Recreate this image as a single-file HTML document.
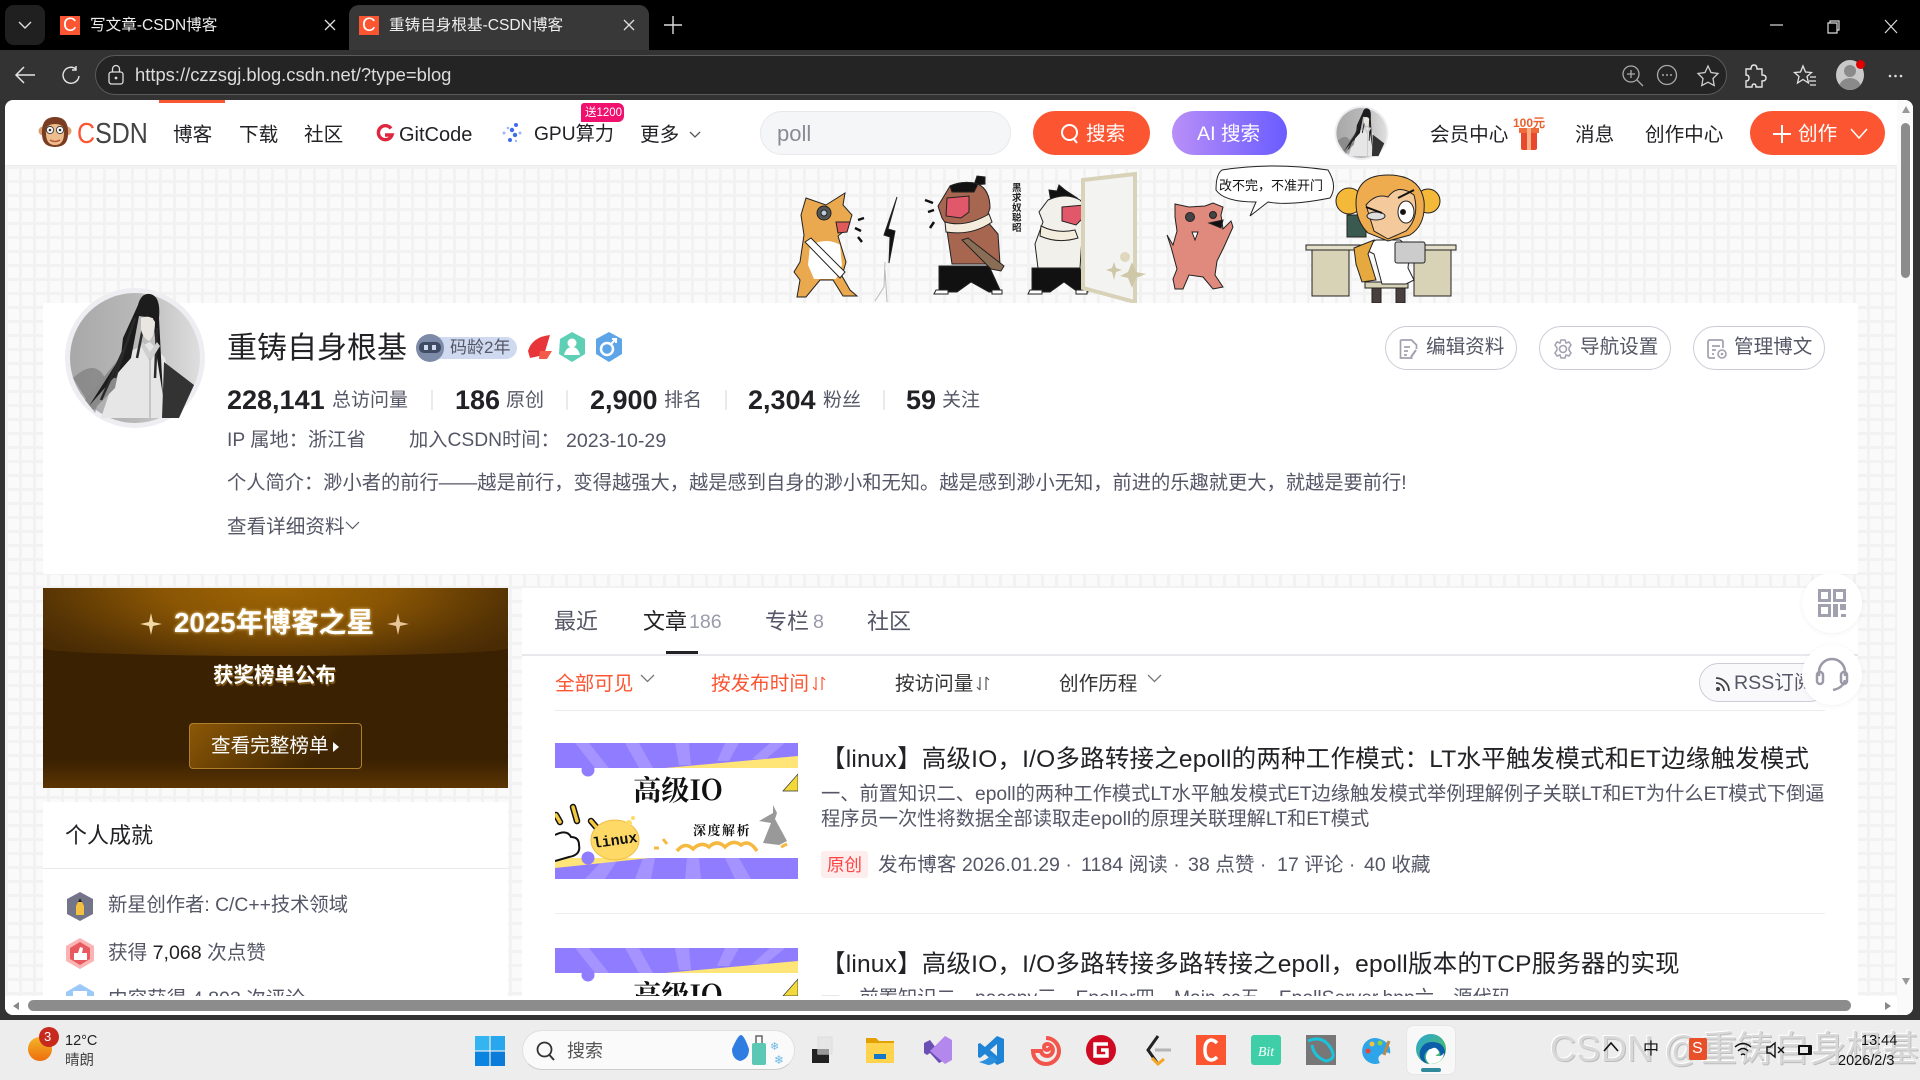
<!DOCTYPE html>
<html lang="zh"><head><meta charset="utf-8"><title>重铸自身根基-CSDN博客</title>
<style>
*{box-sizing:border-box}
html,body{margin:0;padding:0;width:1920px;height:1080px;overflow:hidden;background:#333;font-family:"Liberation Sans","Noto Sans CJK SC",sans-serif}
.a{position:absolute}
.t{position:absolute;white-space:nowrap;line-height:30px;height:30px;font-size:19.6px;color:#555666;margin-top:1px}
.d{color:#222226}
.nav{color:#222226;margin-top:2px}
svg{position:absolute;overflow:visible}
.btn{position:absolute;top:326px;width:132px;height:44px;border:1px solid #ccccd8;border-radius:22px;background:#fff}
.sep{position:absolute;top:390px;width:2px;height:20px;background:#eaeaee}
.num{font-weight:700;font-size:27px;color:#222226}
.ti{position:absolute;top:1035px;width:30px;height:30px}
</style></head><body>
<svg width="0" height="0" style="position:absolute">
<defs>
<symbol id="av" viewBox="0 0 140 140">
<defs><linearGradient id="ag" x1="0" y1="0" x2="1" y2="0"><stop offset="0" stop-color="#a8a8a8"/><stop offset=".5" stop-color="#b8b8b8"/><stop offset="1" stop-color="#dedede"/></linearGradient></defs>
<circle cx="70" cy="70" r="70" fill="#eeeef2"/>
<circle cx="70" cy="70" r="65" fill="url(#ag)"/>
<path d="M8 90Q30 70 40 90L30 125z" fill="#777" opacity=".6"/>
<path d="M85 54L57 67 36 130H112L100 70z" fill="#e6e6e6"/>
<path d="M99 74L129 97 114 130H97z" fill="#333"/>
<path d="M57 67L20 112 28 122 50 100z" fill="#8a8a8a"/>
<path d="M73 17Q76 5 85 6 96 8 94 30L98 108 92 70 88 30 74 28 66 70 24 118 56 68 58 50z" fill="#1c1c1c"/>
<path d="M80 30L72 70M70 30L50 90M92 40L90 90M64 50L36 112" stroke="#2a2a2a" stroke-width="2.500" fill="none"/>
<path d="M76 30Q86 26 90 34 90 48 84 53 78 50 76 42z" fill="#e9e5e0"/>
<path d="M78 54l7 10 7-10 3 4-10 16-9-16z" fill="#cfcfcf"/>
<path d="M85 70v60" stroke="#bbb" stroke-width="1.500"/>
</symbol>
<symbol id="th" viewBox="0 0 243 136">
<rect width="243" height="136" fill="#fff"/>
<rect width="243" height="25" fill="#8f7cff"/>
<path d="M20 0l20 25h14L34 0zM70 0l14 25h14L84 0zM120 0l4 22h12L134 0zM170 0l-8 18h12L184 0zM215 0l-18 16h14L230 0z" fill="#a593ff"/>
<path d="M110 25L243 13V25z" fill="#ffe477"/>
<rect y="115" width="243" height="21" fill="#8f7cff"/>
<path d="M30 136l20-21h14L50 136zM80 136l8-21h12L96 136zM130 136l2-21h12L146 136zM180 136l-10-21h14L196 136z" fill="#a593ff"/>
<path d="M0 115H95L0 125z" fill="#ffe477"/>
<circle cx="33" cy="27" r="6.500" fill="#8f7cff"/><circle cx="33" cy="115" r="6.500" fill="#8f7cff"/>
<path d="M228 48L243 31V48z" fill="#f2d83a" stroke="#333" stroke-width=".7"/>
<text x="123" y="57" font-size="28" font-weight="700" text-anchor="middle" font-family="'Noto Serif CJK SC','Liberation Serif',serif" fill="#111">高级IO</text>
<path d="M1 72l4 7M18 64l4 14M36 78l6 7" stroke="#111" stroke-width="6.500" stroke-linecap="round"/>
<path d="M1 72l4 7M18 64l4 14M36 78l6 7" stroke="#f5c93d" stroke-width="3.500" stroke-linecap="round"/>
<path d="M0 92q12-6 16 2 8 0 8 8 2 10-10 12L0 118" fill="#fff" stroke="#111" stroke-width="2"/>
<ellipse cx="60" cy="97" rx="24" ry="20" fill="#ffd966" stroke="#f0bd45"/>
<circle cx="74" cy="80" r="3" fill="#ffd966"/><circle cx="78" cy="75" r="2" fill="#ffd966"/>
<text x="60" y="102" font-size="15" font-weight="700" text-anchor="middle" transform="rotate(-8 60 97)" fill="#111" font-family="'Liberation Mono',monospace">linux</text>
<text x="138" y="92" font-size="13" font-weight="700" letter-spacing="1.500" fill="#111" font-family="'Noto Serif CJK SC',serif">深度解析</text>
<path d="M218 62l4 8-2 6 12 22-8 4-16-2 8-20-12-2 14-8z" fill="#999"/>
<path d="M122 108q8-10 16-2 8-8 16-2 8-8 16 0 8-8 16-2 8-6 16 6" fill="none" stroke="#f5b93f" stroke-width="3.500"/>
<path d="M108 96l4 5M104 105h-5M232 101l-6 3" stroke="#f5b93f" stroke-width="3"/>
</symbol>
</defs></svg>

<!-- Tab strip -->
<div class="a" style="left:0;top:0;width:1920px;height:50px;background:#000"></div>
<div class="a" style="left:5px;top:5px;width:40px;height:40px;background:#202020;border-radius:9px"></div>
<svg style="left:18px;top:20px" width="14" height="10"><path d="M1 2l6 6 6-6" fill="none" stroke="#ddd" stroke-width="1.400"/></svg>
<div class="a" style="left:60px;top:16px;width:20px;height:19px;background:#fc5531"></div>
<div class="t" style="left:63px;top:10px;color:#fff;font-size:19px">C</div>
<div class="t" style="left:90px;top:10px;color:#eee;font-size:15.600px">写文章-CSDN博客</div>
<svg style="left:324px;top:19px" width="12" height="12"><path d="M1 1l10 10M11 1L1 11" stroke="#ddd" stroke-width="1.300"/></svg>
<div class="a" style="left:349px;top:5px;width:300px;height:45px;background:#383838;border-radius:10px 10px 0 0"></div>
<div class="a" style="left:359px;top:16px;width:20px;height:19px;background:#fc5531"></div>
<div class="t" style="left:362px;top:10px;color:#fff;font-size:19px">C</div>
<div class="t" style="left:389px;top:10px;color:#eee;font-size:15.600px">重铸自身根基-CSDN博客</div>
<svg style="left:623px;top:19px" width="12" height="12"><path d="M1 1l10 10M11 1L1 11" stroke="#ddd" stroke-width="1.300"/></svg>
<svg style="left:664px;top:16px" width="18" height="18"><path d="M9 0v18M0 9h18" stroke="#ddd" stroke-width="1.400"/></svg>
<svg style="left:1770px;top:20px" width="140" height="14"><path d="M0 5h13" stroke="#ddd" stroke-width="1.200"/><path d="M58 3h9v10h-9zM60 3V1h9v9h-2" fill="none" stroke="#ddd" stroke-width="1.200"/><path d="M115 0l12 13M127 0l-12 13" stroke="#ddd" stroke-width="1.200"/></svg>

<!-- Toolbar -->
<div class="a" style="left:0;top:50px;width:1920px;height:50px;background:#333"></div>
<svg style="left:14px;top:65px" width="22" height="20"><path d="M10 2L2 10l8 8M2 10h19" fill="none" stroke="#e5e5e5" stroke-width="1.500"/></svg>
<svg style="left:61px;top:65px" width="20" height="20"><path d="M15 4A8 8 0 1 0 18 11M15 1v4h-4" fill="none" stroke="#e5e5e5" stroke-width="1.400"/></svg>
<div class="a" style="left:95px;top:55px;width:1632px;height:40px;background:#242424;border:1px solid #5a5a5a;border-radius:20px"></div>
<svg style="left:108px;top:65px" width="16" height="20"><rect x="1" y="7" width="14" height="12" rx="2.500" fill="none" stroke="#ddd" stroke-width="1.300"/><path d="M4.500 7V4a3.500 3.500 0 0 1 7 0v3" fill="none" stroke="#ddd" stroke-width="1.300"/><circle cx="8" cy="13" r="1.400" fill="#ddd"/></svg>
<div class="t" style="left:135px;top:59px;color:#dcdcdc;font-size:18.400px">https://czzsgj.blog.csdn.net/?type=blog</div>
<svg style="left:1620px;top:64px" width="290" height="24">
<circle cx="11" cy="10" r="8" fill="none" stroke="#aaa" stroke-width="1.300"/><path d="M17 16l6 6M7 10h8M11 6v8" stroke="#aaa" stroke-width="1.300"/>
<circle cx="47" cy="11" r="9.500" fill="none" stroke="#aaa" stroke-width="1.300"/><path d="M42 11h2M46 11h2M50 11h2" stroke="#aaa" stroke-width="1.600"/>
<path d="M88 2l3 6.500 7 1-5 5 1.200 7-6.200-3.300-6.200 3.300 1.200-7-5-5 7-1z" fill="none" stroke="#ccc" stroke-width="1.300"/>
<path d="M127 4h5q0-4 3-4t3 4h5v6q4 0 4 3t-4 3v6h-6q0-3-2-3t-2 3h-6v-6q3 0 3-3t-3-3z" fill="none" stroke="#e5e5e5" stroke-width="1.400" transform="translate(-1,1)"/>
<path d="M183 2l2.500 6 6 .5-4.500 4 1.500 6.500-5.500-3.500-5.500 3.500 1.500-6.500-4.500-4 6-.5zM190 13h6M189 17h7M190 21h6" fill="none" stroke="#e5e5e5" stroke-width="1.300"/>
<circle cx="270" cy="12" r="1.300" fill="#ddd"/><circle cx="275.500" cy="12" r="1.300" fill="#ddd"/><circle cx="281" cy="12" r="1.300" fill="#ddd"/>
</svg>
<div class="a" style="left:1836px;top:60px;width:28px;height:30px;border-radius:50%;background:#c9c9c9;overflow:hidden"><div class="a" style="left:8px;top:5px;width:12px;height:12px;border-radius:50%;background:#8a8a8a"></div><div class="a" style="left:3px;top:18px;width:22px;height:20px;border-radius:50%;background:#8a8a8a"></div></div>
<div class="a" style="left:1856px;top:60px;width:9px;height:9px;border-radius:50%;background:#e00000"></div>

<!-- Page -->
<div class="a" style="left:5px;top:100px;width:1908px;height:915px;background:#fff;border-radius:8px 8px 8px 8px;overflow:hidden">
<div class="a" style="left:0;top:66px;width:1908px;height:830px;background-color:#fafafa;background-image:linear-gradient(#f2f2f2 3px,transparent 3px),linear-gradient(90deg,#f2f2f2 3px,transparent 3px);background-size:14px 14px"></div>
</div>
<div class="a" style="left:159px;top:100px;width:66px;height:3px;background:#fc5531"></div>
<div class="a" style="left:5px;top:165px;width:1892px;height:1px;background:#ececec"></div>

<!-- Nav -->
<svg style="left:38px;top:116px" width="34" height="32" viewBox="0 0 34 32">
<circle cx="5" cy="15" r="4.500" fill="#d9a06f"/><circle cx="29" cy="15" r="4.500" fill="#d9a06f"/>
<path d="M17 1q14 0 13 17 0 13-13 13T4 18Q3 1 17 1z" fill="#7a3d22"/>
<path d="M17 8q10 0 9 9 0 12-9 12T8 17q-1-9 9-9z" fill="#eebd8e"/>
<circle cx="12" cy="14" r="3.600" fill="#fff" stroke="#444"/><circle cx="22" cy="14" r="3.600" fill="#fff" stroke="#444"/>
<circle cx="12" cy="14" r="1.300" fill="#333"/><circle cx="22" cy="14" r="1.300" fill="#333"/>
<path d="M12 24q5 3 10 0" fill="none" stroke="#b8553a" stroke-width="1.500"/></svg>
<div class="t" style="left:77px;top:118px;font-size:25px;color:#444;transform:scaleY(1.15)"><span style="color:#fc5531">C</span>SDN</div>
<div class="t nav" style="left:173px;top:118px">博客</div>
<div class="t nav" style="left:239px;top:118px">下载</div>
<div class="t nav" style="left:304px;top:118px">社区</div>
<svg style="left:376px;top:124px" width="17" height="18"><path d="M15 4.500A7 7 0 1 0 16 11H9" fill="none" stroke="#e0263f" stroke-width="3.400"/></svg>
<div class="t nav" style="left:399px;top:118px;font-size:20px">GitCode</div>
<svg style="left:501px;top:122px" width="22" height="22"><g fill="#3f6bea"><circle cx="15" cy="3" r="2"/><circle cx="11" cy="8" r="2.200"/><circle cx="14" cy="13" r="2.200"/><circle cx="9" cy="18" r="2"/></g><g fill="#9db6f7"><circle cx="3" cy="11" r="1.500"/><circle cx="7" cy="6" r="1.300"/><circle cx="19" cy="11" r="1.500"/><circle cx="15" cy="19" r="1.200"/></g></svg>
<div class="t nav" style="left:534px;top:118px;font-size:19.200px">GPU算力</div>
<div class="a" style="left:581px;top:103px;width:43px;height:19px;background:#f0106e;border-radius:3px 6px 6px 0"></div>
<div class="t" style="left:585px;top:97px;color:#fff;font-size:11.500px">送1200</div>
<div class="t nav" style="left:640px;top:118px">更多</div>
<svg style="left:689px;top:131px" width="12" height="8"><path d="M1 1l5 5 5-5" fill="none" stroke="#555" stroke-width="1.300"/></svg>
<div class="a" style="left:760px;top:111px;width:251px;height:44px;background:#f5f6f7;border:1px solid #e8e8ed;border-radius:22px"></div>
<div class="t" style="left:777px;top:118px;font-size:22px;color:#8a8a96">poll</div>
<div class="a" style="left:1033px;top:111px;width:117px;height:44px;background:#fc5531;border-radius:22px"></div>
<svg style="left:1060px;top:123px" width="20" height="22"><circle cx="9.500" cy="9.500" r="7.500" fill="none" stroke="#fff" stroke-width="2"/><path d="M13 15l4 5" stroke="#fff" stroke-width="2"/></svg>
<div class="t" style="left:1086px;top:118px;color:#fff">搜索</div>
<div class="a" style="left:1172px;top:111px;width:115px;height:44px;background:linear-gradient(90deg,#b98ff8,#6a5cff);border-radius:22px"></div>
<div class="t" style="left:1197px;top:118px;color:#fff">AI 搜索</div>
<svg style="left:1334px;top:106px" width="55" height="54"><use href="#av" width="55" height="54"/></svg>
<div class="t nav" style="left:1430px;top:118px">会员中心</div>
<svg style="left:1514px;top:116px" width="31" height="35"><rect x="7" y="14" width="16" height="20" rx="2" fill="#e8482e"/><rect x="5" y="12" width="20" height="5" fill="#f06a3a"/><rect x="13" y="12" width="4" height="22" fill="#f4b183"/><text x="15" y="11" font-size="12" font-weight="700" text-anchor="middle" fill="#e8602e" font-family="'Liberation Sans',sans-serif">100元</text></svg>
<div class="t nav" style="left:1575px;top:118px">消息</div>
<div class="t nav" style="left:1645px;top:118px">创作中心</div>
<div class="a" style="left:1750px;top:111px;width:135px;height:44px;background:#fc5531;border-radius:22px"></div>
<svg style="left:1772px;top:124px" width="20" height="20"><path d="M10 1v18M1 10h18" stroke="#fff" stroke-width="2"/></svg>
<div class="t" style="left:1798px;top:118px;color:#fff">创作</div>
<svg style="left:1850px;top:128px" width="18" height="12"><path d="M1 1l8 9 8-9" fill="none" stroke="#fff" stroke-width="1.500"/></svg>

<!-- Banner -->
<svg style="left:0;top:0" width="1920" height="1080">
<g stroke="#222" stroke-width="1">
<!-- dog -->
<path d="M806 198L826 205 845 193 843 205 852 215 848 228 838 236 846 262 842 276 850 290 857 296H843L833 280H820L806 297H797L800 280 794 272 800 262 804 235 801 215z" fill="#eaa94f"/>
<path d="M810 245q18-8 30 0l2 20-6 14-22 0-6-14z" fill="#fff" stroke="none"/>
<path d="M805 242l6-4 34 34-5 6z" fill="#fff"/>
<circle cx="824" cy="213" r="7" fill="#555"/><circle cx="824" cy="213" r="3" fill="#bcd"/>
<path d="M836 222l14 0-3 10-9 1z" fill="#e05a5a"/>
<path d="M858 220l6-2M855 228l6 3M858 237l4 5" stroke="#111" stroke-width="2.500"/>
<!-- lightning -->
<path d="M897 197l-9 32 7 2-6 32 1-26-6-2z" fill="#111"/>
<path d="M885 262l-1 25-9 14M885 270l2 32" fill="none" stroke="#bbb"/>
<!-- brown man -->
<path d="M974 185l3-9 8 1 0 7z" fill="#111"/>
<path d="M950 186q14-6 28-2 12 6 12 24l-4 12 12 14 2 30-48 0 -6-40 -4-6-4-12z" fill="#a66650"/>
<path d="M950 186q14-6 28-2l-4 8-22 0z" fill="#111"/>
<path d="M947 198l22-2 0 16-8 6-15-2z" fill="#e0586a"/>
<path d="M945 222q20 6 44-8l3 8q-20 14-46 10z" fill="#f4ecdc"/>
<path d="M939 266h50l12 26h-12l-18-10-14 10h-18z" fill="#111"/>
<path d="M936 290h12v4h-14zM992 290h10v4h-10z" fill="#fff"/>
<path d="M962 240l6-2 36 28-3 5-10-2z" fill="#8a6d55"/>
<path d="M925 200l8 3M928 212l6-2M934 222l-4 6" stroke="#111" stroke-width="2.500"/>
<!-- white man -->
<path d="M1049 190l8 1 2-6 6 5 12 8-26 4z" fill="#111"/>
<path d="M1048 200q18-8 32 0l8 10-6 16 0 12-2 30h-42l-3-24 8-22-4-10z" fill="#f2f0ea"/>
<path d="M1062 207l22-2 0 12-8 8-14-4z" fill="#e0586a"/>
<path d="M1041 226q16 8 34 4l3 8q-20 6-38-2z" fill="#f4ecdc"/>
<path d="M1032 268h48l8 24h-10l-14-10-14 10h-18z" fill="#111"/>
<path d="M1030 290h12v4h-14zM1076 290h11v4h-11z" fill="#fff"/>
<path d="M1100 210l8-3M1098 221l8 1M1100 232l5 5" stroke="#111" stroke-width="2.500"/>
<!-- door -->
<path d="M1083 180l52-6v128l-52-14z" fill="#f3f3f2" stroke="#d8d2b8" stroke-width="4"/>
<circle cx="1125" cy="257" r="5" fill="#e0d8bc" stroke="none"/>
<path d="M1132 262l4 10 10 2-10 4-4 10-4-10-8-2 8-4z" fill="#cec7a8" stroke="none"/>
<path d="M1114 262l2 6 6 2-6 2-2 8-2-8-6-2 6-2z" fill="#cec7a8" stroke="none"/>
<!-- pig -->
<path d="M1175 204l14 3 16-1 8-3 10 4-2 8 2 14 8-8 2 6-10 22-6 12-2 14 8 12-10 2-10-12-14-2-6 14-8 0-2-10 4-10-6-22-4-12 6 10 4-14-2-14z" fill="#e08a7e"/>
<circle cx="1190" cy="217" r="4.500" fill="#444"/><circle cx="1213" cy="215" r="3.500" fill="#444"/>
<path d="M1209 223l14-3-2 8z" fill="#111"/>
<path d="M1192 232l3 8 3-8z" fill="#fff"/>
<!-- monitor, desk -->
<rect x="1347" y="215" width="19" height="22" fill="#3a5a50"/>
<rect x="1306" y="245" width="150" height="5" fill="#e4dfc8"/>
<rect x="1312" y="250" width="37" height="46" fill="#d8d3b6"/>
<rect x="1414" y="250" width="37" height="46" fill="#d8d3b6"/>
<rect x="1372" y="288" width="9" height="15" fill="#4a3f3f"/><rect x="1396" y="288" width="9" height="15" fill="#4a3f3f"/>
<rect x="1365" y="282" width="43" height="6" fill="#d8d3b6"/>
<path d="M1376 240l24 0 10 8-2 20 6 12-8 4h-24l-8-30-12-6z" fill="#fff"/>
<path d="M1354 248l20-8-6 14 8 26-14 2-6-18z" fill="#e6a93f"/>
<rect x="1395" y="242" width="30" height="21" rx="2" fill="#ccc"/>
<!-- monkey -->
<circle cx="1349" cy="201" r="13" fill="#f5b93a"/><circle cx="1428" cy="201" r="12" fill="#f5b93a"/>
<path d="M1388 175q32 0 36 26 2 24-14 34l-22 6-20-8q-12-12-12-30 0-28 32-28z" fill="#eeac4f"/>
<path d="M1366 205q10-12 22-8 10-14 26-2 6 22-8 36l-18 8-14-8z" fill="#f4c99c"/>
<ellipse cx="1406" cy="212" rx="8" ry="11" fill="#fff"/><circle cx="1403" cy="212" r="2.500" fill="#111"/>
<ellipse cx="1376" cy="216" rx="9" ry="4" fill="#ddd"/>
<path d="M1366 207l16 6M1398 198l16-8" stroke="#111" stroke-width="2" fill="none"/>
<!-- bubble -->
<path d="M1222 170q50-8 106 0 10 16 2 28-40 8-62 4l-18 14 6-14q-32 0-40-12 0-16 6-20z" fill="#fff"/>
</g>
<text x="1219" y="190" font-size="13" fill="#111" font-family="'Noto Sans CJK SC',sans-serif">改不完&#65292;不准开门</text>
<text font-size="9.500" fill="#222" font-weight="700" font-family="'Noto Sans CJK SC',sans-serif"><tspan x="1012" y="191">黑</tspan><tspan x="1012" y="201">求</tspan><tspan x="1012" y="211">奴</tspan><tspan x="1012" y="221">聪</tspan><tspan x="1012" y="231">昭</tspan></text>
</svg>

<!-- Profile card -->
<div class="a" style="left:43px;top:303px;width:1815px;height:271px;background:#fff;border-radius:2px"></div>
<svg style="left:65px;top:288px" width="140" height="140"><use href="#av" width="140" height="140"/></svg>
<div class="t d" style="left:227px;top:333px;font-size:30px">重铸自身根基</div>
<div class="a" style="left:430px;top:337px;width:87px;height:22px;background:#cfdaf0;border-radius:11px"></div>
<svg style="left:415px;top:331px" width="30" height="32"><circle cx="15" cy="17" r="14" fill="#7d8ba8"/><rect x="4" y="11" width="22" height="11" rx="5" fill="#3f4a63"/><rect x="9" y="14" width="4" height="5" fill="#cfd9ef"/><rect x="17" y="14" width="4" height="5" fill="#cfd9ef"/></svg>
<div class="t" style="left:450px;top:332px;font-size:17px">码龄2年</div>
<svg style="left:526px;top:331px" width="100" height="32">
<path d="M2 20Q6 6 24 4l-6 20-14 3z" fill="#e8353a"/><path d="M14 20h12l-5 8h-8z" fill="#f25a4a"/>
<path d="M34 8l12-7 13 7v15l-13 8-13-8z" fill="#5dcfb5"/><circle cx="46" cy="12" r="4.500" fill="#fff"/><path d="M38 24q2-8 8-8t8 8z" fill="#fff"/>
<path d="M70 8l13-7 13 7v15l-13 8-13-8z" fill="#5da5e8"/><circle cx="81" cy="18" r="6" fill="none" stroke="#fff" stroke-width="2.500"/><path d="M85 13l5-5M86 8h4v4" fill="none" stroke="#fff" stroke-width="2"/></svg>

<div class="t num" style="left:227px;top:384px">228,141</div><div class="t" style="left:332px;top:385px;font-size:19px">总访问量</div>
<div class="sep" style="left:431px"></div>
<div class="t num" style="left:455px;top:384px">186</div><div class="t" style="left:506px;top:385px;font-size:19px">原创</div>
<div class="sep" style="left:566px"></div>
<div class="t num" style="left:590px;top:384px">2,900</div><div class="t" style="left:664px;top:385px;font-size:19px">排名</div>
<div class="sep" style="left:725px"></div>
<div class="t num" style="left:748px;top:384px">2,304</div><div class="t" style="left:823px;top:385px;font-size:19px">粉丝</div>
<div class="sep" style="left:883px"></div>
<div class="t num" style="left:906px;top:384px">59</div><div class="t" style="left:942px;top:385px;font-size:19px">关注</div>

<div class="t" style="left:227px;top:425px;font-size:19.250px">IP 属地&#65306;浙江省</div>
<div class="t" style="left:409px;top:425px;font-size:19.250px">加入CSDN时间&#65306;</div>
<div class="t" style="left:566px;top:425px">2023-10-29</div>
<div class="t" style="left:227px;top:468px;font-size:19.250px">个人简介&#65306;渺小者的前行——越是前行&#65292;变得越强大&#65292;越是感到自身的渺小和无知。越是感到渺小无知&#65292;前进的乐趣就更大&#65292;就越是要前行!</div>
<div class="t" style="left:227px;top:511px">查看详细资料</div>
<svg style="left:345px;top:521px" width="15" height="10"><path d="M1 1l6.500 6.500L14 1" fill="none" stroke="#555666" stroke-width="1.200"/></svg>

<div class="btn" style="left:1385px"></div><div class="btn" style="left:1539px"></div><div class="btn" style="left:1693px"></div>
<svg style="left:1399px;top:338px" width="20" height="22"><path d="M1.500 2h11l5 5v4M1.500 2v18h12M5 9h6M5 13h4M5 17h3" fill="none" stroke="#a0a0b0" stroke-width="1.700"/><path d="M17 12l-5 7" stroke="#a0a0b0" stroke-width="2"/></svg>
<div class="t" style="left:1426px;top:331px">编辑资料</div>
<svg style="left:1553px;top:339px" width="20" height="20"><circle cx="10" cy="10" r="3.500" fill="none" stroke="#a0a0b0" stroke-width="1.600"/><path d="M8 1h4l1 3 3-1 2 3-2 3v2l2 3-2 3-3-1-1 3H8l-1-3-3 1-2-3 2-3V9L2 6l2-3 3 1z" fill="none" stroke="#a0a0b0" stroke-width="1.500"/></svg>
<div class="t" style="left:1580px;top:331px">导航设置</div>
<svg style="left:1707px;top:338px" width="20" height="22"><path d="M8 20H3q-2 0-2-2V4q0-2 2-2h11q2 0 2 2v6M5 8h8M5 12h4M5 16h2" fill="none" stroke="#a0a0b0" stroke-width="1.700"/><circle cx="15" cy="16" r="4" fill="none" stroke="#a0a0b0" stroke-width="1.600"/><circle cx="15" cy="16" r="1.300" fill="#a0a0b0"/></svg>
<div class="t" style="left:1734px;top:331px">管理博文</div>

<!-- Star banner -->
<div class="a" style="left:43px;top:588px;width:465px;height:200px;overflow:hidden;background:#3a2102">
<div class="a" style="left:0;top:0;width:465px;height:68px;background:radial-gradient(ellipse 280px 90px at 50% 0,#9e6505 0,#8a5604 40%,#553304 85%,#4a2c04 100%);border-radius:0 0 50% 50%/0 0 8px 8px"></div>
<div class="a" style="left:0;bottom:0;width:465px;height:28px;background:linear-gradient(#3a2102,#5c3503)"></div>
</div>
<svg style="left:140px;top:610px" width="270" height="28">
<path d="M11 3l2 9 9 2-9 2-2 9-2-9-9-2 9-2z" fill="#f3d9a8"/><path d="M258 3l2 9 9 2-9 2-2 9-2-9-9-2 9-2z" fill="#e8c69a"/></svg>
<div class="t" style="left:174px;top:607px;font-size:27.700px;font-weight:700;color:#fff;text-shadow:0 0 3px #f7d58a">2025年博客之星</div>
<div class="t" style="left:213px;top:660px;font-size:20.500px;font-weight:700;color:#fff;text-shadow:1px 2px 1px #8a6220">获奖榜单公布</div>
<div class="a" style="left:189px;top:723px;width:173px;height:46px;border:1px solid #b07f2c;border-radius:4px;background:linear-gradient(135deg,#8c5806,#3f2503 75%)"></div>
<div class="t" style="left:211px;top:730px;color:#fff">查看完整榜单</div>
<svg style="left:332px;top:741px" width="8" height="12"><path d="M1 1l6 5-6 5z" fill="#fff"/></svg>

<!-- Achievements -->
<div class="a" style="left:43px;top:802px;width:465px;height:195px;background:#fff"></div>
<div class="t" style="left:65px;top:820px;font-size:22px;color:#222226">个人成就</div>
<div class="a" style="left:43px;top:868px;width:465px;height:1px;background:#e8e8ed"></div>
<svg style="left:66px;top:891px" width="30" height="110">
<path d="M14 1l13 7v15l-13 7-13-7V8z" fill="#75758a"/><path d="M14 7l4 8v9h-8v-9z" fill="#f5c040"/><path d="M14 7l2 4h-4z" fill="#222"/>
<path d="M14 47l14 8v15l-14 8-14-8V55z" fill="#fbb4b4"/><path d="M14 51l10 6v11l-10 6-10-6V57z" fill="#e85a5f"/><path d="M8 62h4l2-6 3 1-1 5h5v7H8z" fill="#fff"/>
<path d="M14 93l14 8v15H0v-15z" fill="#9cc9f7"/><rect x="7" y="100" width="14" height="10" fill="#fff"/>
</svg>
<div class="t" style="left:108px;top:890px;font-size:19.300px">新星创作者: C/C++技术领域</div>
<div class="t" style="left:108px;top:937px">获得 <span style="color:#222226">7,068</span> 次点赞</div>
<div class="t" style="left:108px;top:983px">内容获得 4,803 次评论</div>

<!-- Right panel -->
<div class="a" style="left:522px;top:588px;width:1336px;height:412px;background:#fff"></div>
<div class="t" style="left:554px;top:606px;font-size:22px">最近</div>
<div class="t d" style="left:643px;top:606px;font-size:22px">文章</div><div class="t" style="left:689px;top:606px;font-size:19.600px;color:#999aaa">186</div>
<div class="t" style="left:765px;top:606px;font-size:22px">专栏</div><div class="t" style="left:813px;top:606px;color:#999aaa">8</div>
<div class="t" style="left:867px;top:606px;font-size:22px">社区</div>
<div class="a" style="left:522px;top:654px;width:1336px;height:2px;background:#e8e8ed"></div>
<div class="a" style="left:666px;top:651px;width:32px;height:3px;background:#222226"></div>
<div class="t" style="left:555px;top:668px;color:#fc5531">全部可见</div>
<svg style="left:640px;top:674px" width="15" height="10"><path d="M1 1l6.500 6.500L14 1" fill="none" stroke="#777" stroke-width="1.300"/></svg>
<div class="t" style="left:711px;top:668px;color:#fc5531">按发布时间</div>
<svg style="left:812px;top:676px" width="16" height="15"><path d="M4 1v13M4 14l-3-3M10 1v13M10 1l3 3" fill="none" stroke="#fc5531" stroke-width="1.200"/></svg>
<div class="t" style="left:895px;top:668px;color:#333">按访问量</div>
<svg style="left:976px;top:676px" width="16" height="15"><path d="M4 1v13M4 14l-3-3M10 1v13M10 1l3 3" fill="none" stroke="#555" stroke-width="1.200"/></svg>
<div class="t" style="left:1059px;top:668px;color:#333">创作历程</div>
<svg style="left:1147px;top:674px" width="15" height="10"><path d="M1 1l6.500 6.500L14 1" fill="none" stroke="#777" stroke-width="1.300"/></svg>
<div class="a" style="left:555px;top:710px;width:1270px;height:1px;background:#ececf0"></div>
<div class="a" style="left:1699px;top:663px;width:130px;height:39px;background:#f9f9fb;border:1px solid #ccccd8;border-radius:20px"></div>
<svg style="left:1715px;top:675px" width="16" height="17"><circle cx="3" cy="14" r="2" fill="#444"/><path d="M1 8a8 8 0 0 1 8 8M1 3a13 13 0 0 1 13 13" fill="none" stroke="#444" stroke-width="1.800"/></svg>
<div class="t" style="left:1734px;top:667px">RSS订阅</div>

<!-- Floating -->
<div class="a" style="left:1802px;top:573px;width:60px;height:60px;border-radius:50%;background:#fff;box-shadow:0 1px 6px rgba(0,0,0,.06)"></div>
<svg style="left:1818px;top:589px" width="28" height="28"><g fill="none" stroke="#a0a0ae" stroke-width="3"><rect x="1.500" y="1.500" width="10" height="10"/><rect x="16.500" y="1.500" width="10" height="10"/><rect x="1.500" y="16.500" width="10" height="10"/></g><path d="M15 15h5v13h-5zM22 15h6v6h-6zM23 25h5v3h-5z" fill="#a0a0ae"/></svg>
<div class="a" style="left:1802px;top:645px;width:60px;height:60px;border-radius:50%;background:#fff;box-shadow:0 1px 6px rgba(0,0,0,.06)"></div>
<svg style="left:1815px;top:658px" width="34" height="34"><path d="M4 18v-4a13 13 0 0 1 26 0v4M30 22q-2 8-12 10" fill="none" stroke="#9a9aa8" stroke-width="2.500"/><rect x="2" y="14" width="6" height="12" rx="3" fill="none" stroke="#9a9aa8" stroke-width="2.500"/><rect x="26" y="14" width="6" height="12" rx="3" fill="none" stroke="#9a9aa8" stroke-width="2.500"/></svg>

<!-- Articles -->
<svg style="left:555px;top:743px" width="243" height="136"><use href="#th" width="243" height="136"/></svg>
<div class="t d" style="left:821px;top:744px;font-size:24.500px;letter-spacing:.2px">【linux】高级IO&#65292;I/O多路转接之epoll的两种工作模式&#65306;LT水平触发模式和ET边缘触发模式</div>
<div class="t" style="left:821px;top:779px;font-size:19.250px">一、前置知识二、epoll的两种工作模式LT水平触发模式ET边缘触发模式举例理解例子关联LT和ET为什么ET模式下倒逼</div>
<div class="t" style="left:821px;top:804px;font-size:19.250px">程序员一次性将数据全部读取走epoll的原理关联理解LT和ET模式</div>
<div class="a" style="left:821px;top:851px;width:47px;height:27px;background:#fdeded;border-radius:3px"></div>
<div class="t" style="left:827px;top:849px;color:#f44;font-size:17.500px">原创</div>
<div class="t" style="left:878px;top:849px">发布博客 2026.01.29 ·</div>
<div class="t" style="left:1081px;top:849px">1184 阅读 ·</div>
<div class="t" style="left:1188px;top:849px">38 点赞 ·</div>
<div class="t" style="left:1277px;top:849px">17 评论 ·</div>
<div class="t" style="left:1364px;top:849px">40 收藏</div>
<div class="a" style="left:555px;top:913px;width:1270px;height:1px;background:#eeeef0"></div>
<div class="a" style="left:555px;top:948px;width:243px;height:48px;overflow:hidden"><svg style="left:0;top:0" width="243" height="136"><use href="#th" width="243" height="136"/></svg></div>
<div class="t d" style="left:821px;top:949px;font-size:24.500px;letter-spacing:.2px">【linux】高级IO&#65292;I/O多路转接多路转接之epoll&#65292;epoll版本的TCP服务器的实现</div>
<div class="t" style="left:821px;top:983px;font-size:19.250px">一、前置知识二、pacopy三、Epoller四、Main.cc五、EpollServer.hpp六、源代码</div>

<!-- Clip bottom & scrollbars -->
<div class="a" style="left:5px;top:996px;width:1908px;height:19px;background:#fff;border-radius:0 0 8px 8px"></div>
<div class="a" style="left:1897px;top:100px;width:16px;height:915px;background:#fafafa;border-radius:0 8px 8px 0"></div>
<div class="a" style="left:1901px;top:123px;width:9px;height:155px;background:#8c8c8c;border-radius:5px"></div>
<svg style="left:1901px;top:106px" width="10" height="880"><path d="M5 0l4 7H1z" fill="#999"/><path d="M1 872h8l-4 7z" fill="#999"/></svg>
<div class="a" style="left:28px;top:1000px;width:1823px;height:11px;background:#8c8c8c;border-radius:6px"></div>
<svg style="left:12px;top:1001px" width="1880" height="10"><path d="M7 1v8L1 5z" fill="#888"/><path d="M1873 1v8l6-4z" fill="#888"/></svg>

<!-- Taskbar -->
<div class="a" style="left:0;top:1020px;width:1920px;height:60px;background:#ededed"></div>
<div class="a" style="left:28px;top:1037px;width:24px;height:24px;border-radius:50%;background:linear-gradient(#f3b62a,#ee6d0c)"></div>
<div class="a" style="left:39px;top:1027px;width:20px;height:20px;border-radius:50%;background:#c72a1d"></div>
<div class="t" style="left:44px;top:1021px;color:#fff;font-size:13px">3</div>
<div class="t" style="left:65px;top:1025px;color:#222;font-size:14.500px">12°C</div>
<div class="t" style="left:65px;top:1045px;color:#444;font-size:14.500px">晴朗</div>
<svg style="left:475px;top:1036px" width="30" height="30"><rect width="14.400" height="14.400" fill="#35b4f2"/><rect x="15.600" width="14.400" height="14.400" fill="#28a7ee"/><rect y="15.600" width="14.400" height="14.400" fill="#0a84e0"/><rect x="15.600" y="15.600" width="14.400" height="14.400" fill="#0a7bd8"/></svg>
<div class="a" style="left:522px;top:1030px;width:273px;height:40px;background:#fafafa;border:1px solid #e0e0e0;border-bottom-color:#ccc;border-radius:20px"></div>
<svg style="left:536px;top:1041px" width="20" height="20"><circle cx="8.500" cy="8.500" r="7" fill="none" stroke="#333" stroke-width="1.800"/><path d="M13 13.500l5 5.500" stroke="#333" stroke-width="2"/></svg>
<div class="t" style="left:567px;top:1035px;font-size:18px;color:#555">搜索</div>
<svg style="left:732px;top:1034px" width="56" height="32"><path d="M0 15q6-14 9-14t8 14q0 10-9 12-8-2-8-12z" fill="#2f7de0"/><rect x="20" y="9" width="14" height="22" rx="2" fill="#5cc7b5"/><path d="M24 9V2h6v7" fill="none" stroke="#666" stroke-width="1.500"/><text x="38" y="16" font-size="11" fill="#6cb8e8" font-family="'DejaVu Sans',sans-serif">❄</text><text x="42" y="30" font-size="12" fill="#6cb8e8" font-family="'DejaVu Sans',sans-serif">❄</text></svg>
<!-- task icons -->
<svg class="ti" style="left:808px"><rect x="4" y="14" width="17" height="14" fill="#222"/><rect x="10" y="2" width="14" height="17" fill="#e6e6e6" stroke="#ddd"/><rect x="10" y="14" width="11" height="5" fill="#999"/></svg>
<svg class="ti" style="left:865px"><path d="M1 3h10l3 3h15v5H1z" fill="#e2a100"/><rect x="1" y="8" width="28" height="20" fill="#ffd34d"/><rect x="9" y="19" width="12" height="5" fill="#1277c9"/></svg>
<svg class="ti" style="left:922px"><path d="M2 8l6-3 15 20-6 3-9-10-3 2-3-2z" fill="#6a4fb5"/><path d="M23 1l7 4v20l-7 4-15-13z" fill="#b487ed"/></svg>
<svg class="ti" style="left:976px"><path d="M21 1l7 3v23l-7 3L9 19l-5 4-2-1V9l2-1 5 4zM21 9l-7 6 7 6z" fill="#1f84d6"/><path d="M3 27q8-2 12-7l6 5q-4 5-9 5z" fill="#2a8fdd"/></svg>
<svg class="ti" style="left:1031px"><path d="M15 3a13 13 0 1 1-13 13h8a6 6 0 1 0 6-7 3 3 0 1 0 3 3" fill="none" stroke="#f2554c" stroke-width="4"/></svg>
<svg class="ti" style="left:1086px"><circle cx="15" cy="15" r="15" fill="#cf0a22"/><path d="M22 9H9v12h12v-6h-6" fill="none" stroke="#fff" stroke-width="3.500"/></svg>
<svg class="ti" style="left:1142px"><path d="M16 1L6 15l10 14" fill="none" stroke="#222" stroke-width="3"/><path d="M13 15h16" stroke="#b5b5b5" stroke-width="3"/><path d="M10 23l6 6 6-5" fill="none" stroke="#f5a623" stroke-width="3"/></svg>
<svg class="ti" style="left:1196px"><rect width="30" height="30" fill="#fc5531"/><path d="M21 8q-3-3-6-3-6 1-6 10t6 10q3 0 6-3" fill="none" stroke="#fff" stroke-width="3.500"/></svg>
<svg class="ti" style="left:1251px"><rect width="30" height="30" rx="3" fill="#3ecfa8"/><text x="15" y="21" text-anchor="middle" font-size="14" font-style="italic" fill="#fff" font-family="'Liberation Serif',serif">Bit</text></svg>
<svg class="ti" style="left:1306px"><rect width="30" height="30" fill="#777"/><path d="M2 6q14-6 22 6t-4 14Q8 22 6 10" fill="none" stroke="#19c4dc" stroke-width="3"/></svg>
<svg class="ti" style="left:1361px"><path d="M15 3a13 13 0 1 0 4 25q-4-6 2-9t8 0Q31 6 15 3z" fill="#2ea5e8"/><circle cx="11" cy="9" r="2.500" fill="#f5c040"/><circle cx="19" cy="8" r="2.500" fill="#8ed13f"/><circle cx="7" cy="16" r="2.500" fill="#e8453c"/><path d="M28 6l-5 14" stroke="#b98a4a" stroke-width="3"/></svg>
<div class="a" style="left:1407px;top:1026px;width:48px;height:48px;background:#f8f8f8;border-radius:6px;box-shadow:0 0 1px rgba(0,0,0,.2)"></div>
<svg class="ti" style="left:1416px;top:1034px"><defs><linearGradient id="eg" x1="0" y1="0" x2="1" y2="1"><stop offset="0" stop-color="#2ba5d9"/><stop offset="1" stop-color="#53c04a"/></linearGradient></defs><circle cx="15" cy="15" r="15" fill="url(#eg)"/><path d="M29 17q-2-9-13-9-9 0-12 9-2 10 8 13-6-6-2-12 6-6 12-2 4 3 1 7 6 2 6-6z" fill="#0d5ea8"/><path d="M15 15q4-3 7 1 3 4-3 5 5 3 9-2-1 10-14 11-7-5-2-13 1-2 3-2z" fill="#fff"/></svg>
<div class="a" style="left:1421px;top:1068px;width:20px;height:4px;border-radius:2px;background:#2f8a9c"></div>

<div class="t" style="left:1550px;top:1030px;font-size:36px;height:36px;line-height:36px;color:#d8d8d8;text-shadow:1px 1px 0 #bdbdbd,-1px -1px 0 #fff;letter-spacing:.4px">CSDN @重铸自身根基</div>
<svg style="left:1603px;top:1041px" width="16" height="12"><path d="M1 10l7-8 7 8" fill="none" stroke="#111" stroke-width="1.600"/></svg>
<div class="t" style="left:1643px;top:1034px;font-size:16px;color:#111">中</div>
<div class="a" style="left:1689px;top:1038px;width:18px;height:22px;background:#e8502a;border-radius:2px"></div>
<div class="t" style="left:1692px;top:1033px;font-size:16px;color:#fff">S</div>
<svg style="left:1734px;top:1040px" width="80" height="20"><path d="M1 7q8-7 16 0M4 11q5-5 10 0M7 15q2-2 4 0" fill="none" stroke="#111" stroke-width="1.400"/><path d="M33 7h3l5-4v14l-5-4h-3zM44 7l6 6M50 7l-6 6" fill="none" stroke="#111" stroke-width="1.400"/><rect x="64" y="5" width="14" height="10" rx="1" fill="#111"/><rect x="66" y="7" width="8" height="6" fill="#ededed"/></svg>
<div class="t" style="left:1861px;top:1025px;font-size:14.500px;color:#111">13:44</div>
<div class="t" style="left:1838px;top:1045px;font-size:14.500px;color:#111">2026/2/3</div>
</body></html>
